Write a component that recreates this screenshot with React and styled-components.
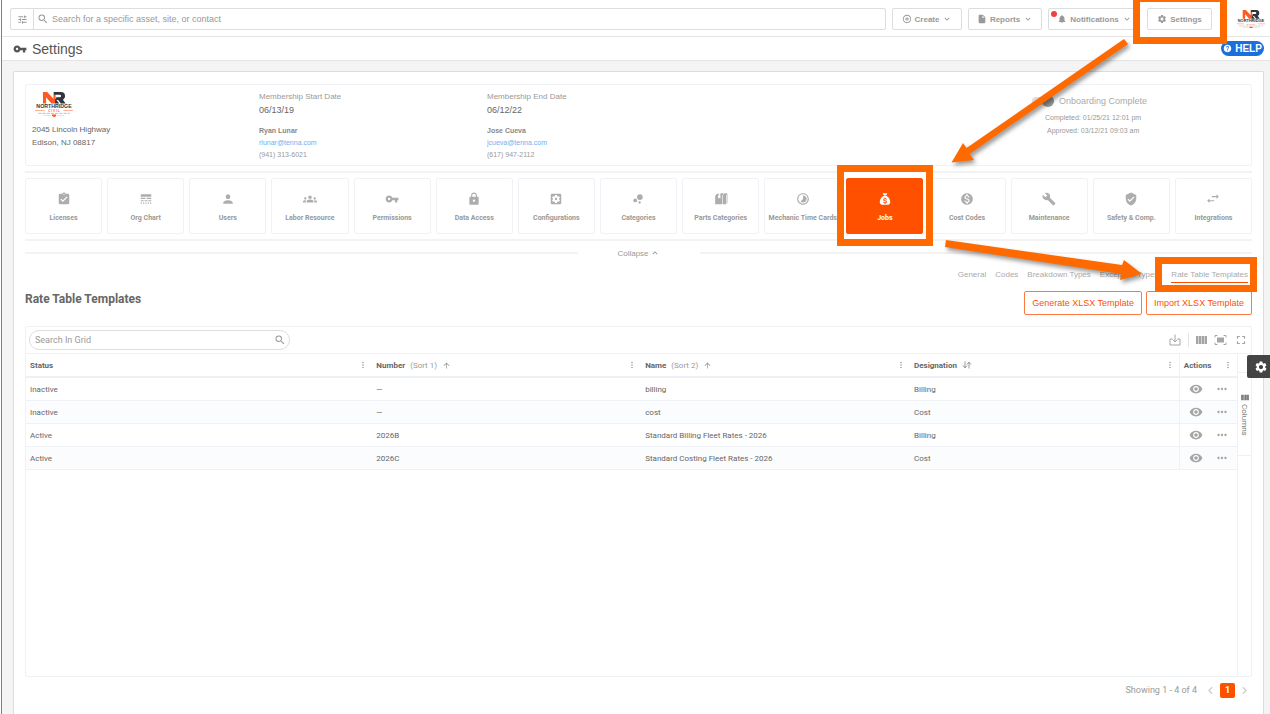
import React from 'react'
import styled, { createGlobalStyle, css } from 'styled-components'
import {
  MdAssignmentTurnedIn,
  MdArrowUpward,
  MdBubbleChart,
  MdBuild,
  MdExpandLess,
  MdExpandMore,
  MdFullscreen,
  MdGroups,
  MdHelp,
  MdInsertDriveFile,
  MdKeyboardArrowLeft,
  MdKeyboardArrowRight,
  MdLineStyle,
  MdLock,
  MdMonetizationOn,
  MdMoreHoriz,
  MdMoreVert,
  MdNotifications,
  MdOutlineAddCircleOutline,
  MdPerson,
  MdSearch,
  MdSettings,
  MdSettingsApplications,
  MdTimelapse,
  MdTune,
  MdVerifiedUser,
  MdVisibility,
  MdVpnKey,
} from 'react-icons/md'

const ORANGE = '#ff5000'
const MARKER = '#ff6a00'
const SANS = "'Liberation Sans', Arial, sans-serif"
const ROBOTO = "Roboto, 'Liberation Sans', sans-serif"

const GlobalStyle = createGlobalStyle`
  * {
    box-sizing: border-box;
  }
  body {
    margin: 0;
    background: #fff;
    color: #666;
    font-family: ${SANS};
    font-size: 8px;
  }
  button, input {
    font-family: inherit;
    margin: 0;
  }
  svg {
    display: block;
    flex-shrink: 0;
  }
`

const Page = styled.div`
  position: relative;
  display: flex;
  flex-direction: column;
  min-height: 100vh;
  margin-left: 1px;
  border-left: 1px solid #7d8287;
  background: #f4f4f4;
  overflow: hidden;
`

const TopBar = styled.header`
  display: flex;
  align-items: center;
  gap: 6px;
  height: 37px;
  padding: 2px 4px 0 8px;
  background: #fff;
  border-bottom: 1px solid #e4e4e4;
`

const SearchBox = styled.div`
  flex: 1;
  display: flex;
  align-items: center;
  height: 22px;
  border: 1px solid #ddd;
  border-radius: 2px;
  color: #999;
`

const FilterButton = styled.button`
  display: flex;
  align-items: center;
  justify-content: center;
  width: 23px;
  height: 20px;
  margin-right: 3px;
  padding: 0;
  border: 0;
  border-right: 1px solid #ddd;
  background: none;
  color: #999;
`

const SearchInput = styled.input`
  flex: 1;
  min-width: 0;
  padding: 0 3px;
  border: 0;
  outline: 0;
  background: none;
  font-size: 9px;
  color: #666;

  &::placeholder {
    color: #999;
    opacity: 1;
  }
`

const BarButton = styled.button`
  position: relative;
  display: flex;
  align-items: center;
  justify-content: center;
  gap: 3px;
  width: ${(props) => props.$width}px;
  height: 22px;
  padding: 0;
  border: 1px solid #ddd;
  border-radius: 2px;
  background: #fff;
  color: #999;
  font-size: 8px;
  font-weight: 700;
`

const AlertDot = styled.span`
  position: absolute;
  top: 2px;
  left: 2px;
  width: 6px;
  height: 6px;
  border-radius: 50%;
  background: #f04040;
`

const Marked = styled.div`
  position: relative;
  z-index: 1;
  display: flex;
  min-width: 0;

  &::before {
    content: '';
    position: absolute;
    z-index: -1;
    inset: ${(props) => props.$inset};
    border: 7px solid ${MARKER};
    background: #fff;
  }
`

const LogoSlot = styled.div`
  display: flex;
  margin-left: 18px;
`

const TitleBar = styled.div`
  display: flex;
  align-items: center;
  gap: 5px;
  height: 24px;
  padding: 0 6px 0 11px;
  background: #fff;
  border-bottom: 1px solid #e4e4e4;
  color: #555;
`

const PageTitle = styled.h1`
  flex: 1;
  margin: 0;
  font-size: 14px;
  font-weight: 400;
  line-height: 16px;
`

const HelpButton = styled.button`
  display: flex;
  align-items: center;
  justify-content: center;
  gap: 3px;
  width: 43px;
  height: 15px;
  padding: 0;
  border: 0;
  border-radius: 8px;
  background: #1a6fdc;
  color: #fff;
  font-size: 10px;
  font-weight: 700;
`

const Panel = styled.main`
  flex: 1;
  display: flex;
  flex-direction: column;
  margin: 10px 6px 0 11px;
  padding: 12px 11px 0;
  border: 1px solid #dcdcdc;
  border-bottom: 0;
  border-radius: 2px 2px 0 0;
  background: #fff;
`

const InfoCard = styled.section`
  display: grid;
  grid-template-columns: 227px 228px 1fr 312px;
  height: 82px;
  padding: 0 6px;
  border: 1px solid #f1f2f7;
  border-radius: 2px;
`

const InfoColumn = styled.div`
  display: flex;
  flex-direction: column;
  padding-top: 7px;
`

const AddressLine = styled.div`
  font-size: 8px;
  line-height: 13px;
  color: #666;
`

const LogoRow = styled.div`
  margin-bottom: 6px;
  padding-left: 2px;
`

const InfoLabel = styled.div`
  font-size: 8px;
  line-height: 10px;
  color: #999;
`

const InfoDate = styled.div`
  margin: 0 0 7px;
  font-size: 9px;
  line-height: 16px;
  color: #666;
`

const ContactLine = styled.div`
  font-size: 7px;
  font-weight: ${(props) => (props.$strong ? 700 : 400)};
  line-height: 12px;
  color: ${(props) => (props.$strong ? '#888' : '#999')};
`

const MailLink = styled.a`
  color: #72aef0;
  text-decoration: none;
`

const Onboarding = styled.div`
  display: flex;
  flex-direction: column;
  padding: 9px 0 0 99px;
`

const SwitchLabel = styled.label`
  display: flex;
  align-items: center;
  gap: 5px;
  margin-bottom: 3px;
  font-size: 9px;
  line-height: 14px;
  color: #aaa;
`

const Switch = styled.input`
  appearance: none;
  display: flex;
  justify-content: flex-end;
  align-items: center;
  width: 22px;
  height: 8px;
  margin: 0;
  border-radius: 4px;
  background: #ddd;

  &::before {
    content: '';
    width: 12px;
    height: 12px;
    border-radius: 50%;
    background: #999;
  }
`

const OnboardingLine = styled.div`
  padding-left: ${(props) => props.$indent}px;
  font-size: 7px;
  line-height: 13px;
  color: #999;
`

const Divider = styled.hr`
  width: 100%;
  height: 2px;
  margin: 5px 0;
  border: 0;
  background: #f3f3f3;
`

const Tiles = styled.nav`
  display: grid;
  grid-template-columns: repeat(15, minmax(0, 1fr));
  gap: 5px;
`

const Tile = styled.button`
  display: flex;
  flex: 1;
  flex-direction: column;
  align-items: center;
  min-width: 0;
  height: 56px;
  padding: 13px 0 0;
  gap: 8px;
  border: 1px solid #f0f2f5;
  border-radius: 2px;
  background: #fff;
  color: #999;
  font-family: ${ROBOTO};
  font-size: 7px;
  font-weight: 700;
  line-height: 8px;
  white-space: nowrap;

  svg {
    color: #adadad;
  }

  ${(props) =>
    props.$active &&
    css`
      border-color: ${ORANGE};
      background: ${ORANGE};
      color: #fff;

      svg {
        color: #fff;
      }
    `}
`

const CollapseRow = styled.div`
  display: flex;
  align-items: center;
  height: 14px;
  margin-bottom: 8px;

  &::before,
  &::after {
    content: '';
    flex: 1;
    height: 2px;
    background: #f3f3f3;
  }
`

const CollapseButton = styled.button`
  display: flex;
  align-items: center;
  justify-content: center;
  gap: 1px;
  width: 122px;
  padding: 0;
  border: 0;
  background: none;
  color: #999;
  font-size: 8px;
`

const Tabs = styled.nav`
  display: flex;
  justify-content: flex-end;
  gap: 9px;
  height: 23px;
  padding: 0 4px;
`

const Tab = styled.a`
  height: 15px;
  padding-top: 2px;
  border-bottom: 1px solid ${(props) => (props.$active ? ORANGE : 'transparent')};
  color: #aaa;
  font-size: 8px;
  line-height: 10px;
  text-decoration: none;
`

const MarkedTab = styled(Marked)`
  margin-left: 4px;
`

const HeadingRow = styled.div`
  display: flex;
  gap: 4px;
  height: 35px;
`

const Heading = styled.h2`
  flex: 1;
  margin: 0;
  font-family: ${ROBOTO};
  font-size: 12px;
  font-weight: 700;
  line-height: 16px;
  color: #666;
`

const OutlineButton = styled.button`
  height: 24px;
  padding: 0 7px;
  border: 1px solid #ff7a40;
  border-radius: 2px;
  background: #fff;
  color: ${ORANGE};
  font-size: 9px;
`

const Grid = styled.section`
  flex: 1;
  display: flex;
  flex-direction: column;
  border: 1px solid #eef1f5;
  border-radius: 2px;
  font-family: ${ROBOTO};
`

const GridToolbar = styled.div`
  display: flex;
  align-items: center;
  justify-content: space-between;
  height: 27px;
  padding: 0 3px;
  border-bottom: 1px solid #eef1f5;
`

const GridSearch = styled.div`
  display: flex;
  align-items: center;
  width: 261px;
  height: 20px;
  padding: 0 3px 0 2px;
  border: 1px solid #ddd;
  border-radius: 10px;
  color: #999;
`

const ToolIcons = styled.div`
  display: flex;
  align-items: center;
  gap: 7px;
`

const ToolDivider = styled.span`
  width: 1px;
  height: 14px;
  background: #e2e6ea;
`

const IconButton = styled.button`
  display: flex;
  padding: 0;
  border: 0;
  background: none;
  color: #a5a5a5;
`

const GridBody = styled.div`
  flex: 1;
  display: flex;
`

const TableArea = styled.div`
  flex: 1;
`

const Table = styled.table`
  width: 100%;
  table-layout: fixed;
  border-collapse: separate;
  border-spacing: 0;
`

const HeadCell = styled.th`
  height: 24px;
  padding: 0 4px;
  border-bottom: 2px solid #edf1f5;
  border-left: ${(props) => (props.$pinned ? '1px solid #eef1f5' : '0')};
  font-size: 8px;
  font-weight: 700;
  text-align: left;
  color: #666;
`

const HeadInner = styled.div`
  display: flex;
  align-items: center;
  gap: 5px;

  svg:last-child {
    margin-left: auto;
  }
`

const SortLabel = styled.span`
  font-weight: 400;
  color: #999;
`

const Row = styled.tr`
  background: ${(props) => (props.$odd ? '#fbfcfe' : '#fff')};
`

const Cell = styled.td`
  height: 23px;
  padding: 0 4px;
  border-bottom: 1px solid #eef1f5;
  border-left: ${(props) => (props.$pinned ? '1px solid #eef1f5' : '0')};
  font-size: 8px;
  color: #666;
`

const RowActions = styled.div`
  display: flex;
  align-items: center;
  gap: 12px;
  padding-left: 5px;
`

const SideBar = styled.aside`
  width: 14px;
  padding-top: 18px;
  border-left: 1px solid #eef1f5;
`

const ColumnsButton = styled.button`
  display: flex;
  align-items: center;
  justify-content: flex-start;
  gap: 3px;
  width: 100%;
  height: 84px;
  padding: 21px 0 0;
  border: 0;
  border-top: 1px solid #eef1f5;
  border-bottom: 1px solid #eef1f5;
  background: none;
  color: #777;
  font-family: ${ROBOTO};
  font-size: 8px;
  writing-mode: vertical-rl;
`

const Footer = styled.footer`
  display: flex;
  align-items: center;
  justify-content: flex-end;
  gap: 2px;
  height: 26px;
  margin-bottom: 11px;
  font-family: ${ROBOTO};
  font-size: 9px;
  color: #999;
`

const ResultCount = styled.span`
  margin-right: 4px;
`

const PageNumber = styled.button`
  width: 15px;
  height: 15px;
  padding: 0;
  border: 0;
  border-radius: 2px;
  background: ${ORANGE};
  color: #fff;
  font-size: 9px;
  font-weight: 700;
`

const Pager = styled(IconButton)`
  color: #ccc;
`

const FloatingSettings = styled.button`
  position: absolute;
  top: 355px;
  right: 0;
  display: flex;
  align-items: center;
  justify-content: flex-end;
  width: 23px;
  height: 23px;
  padding: 0 2px;
  border: 0;
  border-radius: 2px 0 0 2px;
  background: #444;
  color: #fff;
`

const Arrows = styled.svg`
  position: absolute;
  z-index: 2;
  top: 0;
  right: 0;
  pointer-events: none;
  filter: drop-shadow(2px 3px 2px rgba(0, 0, 0, 0.4));
`

function Logo({ width }) {
  return (
    <svg width={width} viewBox="0 0 38 24" role="img" aria-label="Northridge Civil">
      <path d="M8.500 11V0h4l6 6.500V0h2v11h-4l-5-6v6z" fill="#ff5a1f" />
      <path d="M19 0h6.500q4 0 4 4 0 2.500-2 3.300L30 11h-4.500l-2.500-3.500h-2V5h3.500q1.200 0 1.200-1.200t-1.200-1.200H19z" fill="#30343c" />
      <path d="M20 6l4 5h-4z" fill="#30343c" />
      <text
        x="19"
        y="15.500"
        textAnchor="middle"
        fontFamily="Liberation Sans, sans-serif"
        fontSize="5"
        fontWeight="700"
        fill="#30343c"
      >
        NORTHRIDGE
      </text>
      <path d="M1 17.500h9M28 17.500h9" stroke="#ff8a60" strokeWidth="0.700" />
      <text
        x="19"
        y="19"
        textAnchor="middle"
        fontFamily="Liberation Sans, sans-serif"
        fontSize="3"
        fontWeight="700"
        fill="#ff5a1f"
      >
        C I V I L
      </text>
      <path d="M4 20.300h30" stroke="#999" strokeWidth="0.600" strokeDasharray="3 1" />
      <path d="M9 22.300h7M22 22.300h7" stroke="#f0b8a0" strokeWidth="0.500" />
      <path d="M17 21.300h4v1.500L19.500 24 17 22.500z" fill="#ff5a1f" />
    </svg>
  )
}

function MoneyBag() {
  return (
    <svg width="14" height="14" viewBox="0 0 24 24" fill="currentColor">
      <path d="M8 2h8l-2 4h-4z" />
      <path
        fillRule="evenodd"
        d="M9 7h6c4 3 6 6 6 10 0 3-2 5-5 5H8c-3 0-5-2-5-5 0-4 2-7 6-10zm2.300 2.500v1.300c-1.500.3-2.300 1.200-2.300 2.400 0 3 4.500 2 4.500 3.600 0 .6-.5 1-1.500 1s-1.600-.5-1.700-1.200H8.700c.1 1.400 1.100 2.200 2.600 2.500v1.300h1.500v-1.300c1.600-.3 2.500-1.100 2.500-2.400 0-3.100-4.600-2.200-4.600-3.500 0-.6.500-1 1.400-1 .9 0 1.300.4 1.400 1.100h1.600c-.1-1.300-.9-2.200-2.300-2.500V9.500z"
      />
    </svg>
  )
}

function PartsIcon() {
  return (
    <svg width="14" height="14" viewBox="0 0 24 24" fill="currentColor">
      <path d="M2 7l3-4h4L7 7v4l2-1 2 1V7l2-4h1v18H2z" />
      <path d="M15 6l3-4h5l-2 4v15h-6z" />
      <path d="M9.500 6L12 2h5l-2.500 4z" />
      <path d="M22 6l1-3v15l-1 2z" />
    </svg>
  )
}

function SwapIcon() {
  return (
    <svg width="14" height="14" viewBox="0 0 24 24" fill="currentColor">
      <path d="M22 8l-4-4v3h-8v2h8v3zM2 15l4 4v-3h8v-2H6v-3z" />
    </svg>
  )
}

function DownloadIcon() {
  return (
    <svg width="12" height="12" viewBox="0 0 24 24" fill="none" stroke="currentColor" strokeWidth="2">
      <path d="M7 10H2v12h20V10h-5M12 1v15M7 11l5 5 5-5" />
    </svg>
  )
}

function FitIcon() {
  return (
    <svg width="13" height="12" viewBox="0 0 26 24" fill="none" stroke="currentColor" strokeWidth="2">
      <path d="M2 7V3h5M19 3h5v4M24 17v4h-5M7 21H2v-4" />
      <rect x="7" y="8" width="12" height="8" fill="currentColor" />
    </svg>
  )
}

function SortIcon() {
  return (
    <svg width="10" height="8" viewBox="0 0 20 16" fill="none" stroke="#999" strokeWidth="2">
      <path d="M6 1v12M2 9l4 5 4-5M14 15V3M10 7l4-5 4 5" />
    </svg>
  )
}

function BarsIcon({ width = 11, height = 10 }) {
  return (
    <svg width={width} height={height} viewBox="0 0 22 20" fill="currentColor">
      <path d="M0 2h5v16H0zM6 2h4v16H6zM11 2h5v16h-5zM17 2h5v16h-5z" />
    </svg>
  )
}

const TILES = [
  { label: 'Licenses', icon: <MdAssignmentTurnedIn size={14} /> },
  { label: 'Org Chart', icon: <MdLineStyle size={14} /> },
  { label: 'Users', icon: <MdPerson size={14} /> },
  { label: 'Labor Resource', icon: <MdGroups size={14} /> },
  { label: 'Permissions', icon: <MdVpnKey size={14} /> },
  { label: 'Data Access', icon: <MdLock size={14} /> },
  { label: 'Configurations', icon: <MdSettingsApplications size={14} /> },
  { label: 'Categories', icon: <MdBubbleChart size={14} /> },
  { label: 'Parts Categories', icon: <PartsIcon /> },
  { label: 'Mechanic Time Cards', icon: <MdTimelapse size={14} /> },
  { label: 'Jobs', icon: <MoneyBag />, active: true },
  { label: 'Cost Codes', icon: <MdMonetizationOn size={14} /> },
  { label: 'Maintenance', icon: <MdBuild size={14} /> },
  { label: 'Safety & Comp.', icon: <MdVerifiedUser size={14} /> },
  { label: 'Integrations', icon: <SwapIcon /> },
]

const TABS = ['General', 'Codes', 'Breakdown Types', 'Exception Types']

const COLUMNS = [
  { label: 'Status', width: '28.6%' },
  { label: 'Number', sort: '(Sort 1)', width: '22.2%' },
  { label: 'Name', sort: '(Sort 2)', width: '22.2%' },
  { label: 'Designation', sortable: true, width: '22.2%' },
  { label: 'Actions', pinned: true, width: '4.8%' },
]

const ROWS = [
  ['Inactive', '—', 'billing', 'Billing'],
  ['Inactive', '—', 'cost', 'Cost'],
  ['Active', '2026B', 'Standard Billing Fleet Rates - 2026', 'Billing'],
  ['Active', '2026C', 'Standard Costing Fleet Rates - 2026', 'Cost'],
]

function Contact({ label, date, name, email, phone }) {
  return (
    <InfoColumn>
      <InfoLabel>{label}</InfoLabel>
      <InfoDate>{date}</InfoDate>
      <ContactLine $strong>{name}</ContactLine>
      <ContactLine>
        <MailLink href={`mailto:${email}`}>{email}</MailLink>
      </ContactLine>
      <ContactLine>{phone}</ContactLine>
    </InfoColumn>
  )
}

function Header() {
  return (
    <>
      <TopBar>
        <SearchBox>
          <FilterButton aria-label="Filters">
            <MdTune size={11} />
          </FilterButton>
          <MdSearch size={12} />
          <SearchInput
            aria-label="Search"
            placeholder="Search for a specific asset, site, or contact"
          />
        </SearchBox>
        <BarButton $width={70}>
          <MdOutlineAddCircleOutline size={10} />
          Create
          <MdExpandMore size={10} />
        </BarButton>
        <BarButton $width={74}>
          <MdInsertDriveFile size={10} />
          Reports
          <MdExpandMore size={10} />
        </BarButton>
        <BarButton $width={93}>
          <AlertDot />
          <MdNotifications size={10} />
          Notifications
          <MdExpandMore size={10} />
        </BarButton>
        <Marked $inset="-13px -15px -14px -14px">
          <BarButton $width={65}>
            <MdSettings size={10} />
            Settings
          </BarButton>
        </Marked>
        <LogoSlot>
          <Logo width={30} />
        </LogoSlot>
      </TopBar>
      <TitleBar>
        <MdVpnKey size={14} />
        <PageTitle>Settings</PageTitle>
        <HelpButton>
          <MdHelp size={9} />
          HELP
        </HelpButton>
      </TitleBar>
    </>
  )
}

function TemplatesGrid() {
  return (
    <Grid>
      <GridToolbar>
        <GridSearch>
          <SearchInput aria-label="Search in grid" placeholder="Search In Grid" />
          <MdSearch size={12} />
        </GridSearch>
        <ToolIcons>
          <IconButton aria-label="Download">
            <DownloadIcon />
          </IconButton>
          <ToolDivider />
          <IconButton aria-label="Columns">
            <BarsIcon />
          </IconButton>
          <IconButton aria-label="Fit to width">
            <FitIcon />
          </IconButton>
          <IconButton aria-label="Full screen">
            <MdFullscreen size={14} />
          </IconButton>
        </ToolIcons>
      </GridToolbar>
      <GridBody>
        <TableArea>
          <Table>
            <colgroup>
              {COLUMNS.map((column) => (
                <col key={column.label} width={column.width} />
              ))}
            </colgroup>
            <thead>
              <tr>
                {COLUMNS.map((column) => (
                  <HeadCell key={column.label} $pinned={column.pinned}>
                    <HeadInner>
                      {column.label}
                      {column.sort && <SortLabel>{column.sort}</SortLabel>}
                      {column.sort && <MdArrowUpward size={9} color="#999" />}
                      {column.sortable && <SortIcon />}
                      <MdMoreVert size={10} color="#999" />
                    </HeadInner>
                  </HeadCell>
                ))}
              </tr>
            </thead>
            <tbody>
              {ROWS.map((row, index) => (
                <Row key={row[2]} $odd={index % 2 === 1}>
                  {row.map((value, i) => (
                    <Cell key={COLUMNS[i].label}>{value}</Cell>
                  ))}
                  <Cell $pinned>
                    <RowActions>
                      <IconButton aria-label="View">
                        <MdVisibility size={14} />
                      </IconButton>
                      <IconButton aria-label="More">
                        <MdMoreHoriz size={14} />
                      </IconButton>
                    </RowActions>
                  </Cell>
                </Row>
              ))}
            </tbody>
          </Table>
        </TableArea>
        <SideBar>
          <ColumnsButton>
            <BarsIcon width={8} height={7} />
            Columns
          </ColumnsButton>
        </SideBar>
      </GridBody>
    </Grid>
  )
}

export default function App() {
  return (
    <>
      <GlobalStyle />
      <Page>
        <Header />
        <Panel>
          <InfoCard>
            <InfoColumn>
              <LogoRow>
                <Logo width={40} />
              </LogoRow>
              <AddressLine>2045 Lincoln Highway</AddressLine>
              <AddressLine>Edison, NJ 08817</AddressLine>
            </InfoColumn>
            <Contact
              label="Membership Start Date"
              date="06/13/19"
              name="Ryan Lunar"
              email="rlunar@tenna.com"
              phone="(941) 313-6021"
            />
            <Contact
              label="Membership End Date"
              date="06/12/22"
              name="Jose Cueva"
              email="jcueva@tenna.com"
              phone="(617) 947-2112"
            />
            <Onboarding>
              <SwitchLabel>
                <Switch type="checkbox" role="switch" defaultChecked />
                Onboarding Complete
              </SwitchLabel>
              <OnboardingLine $indent={13}>Completed: 01/25/21 12:01 pm</OnboardingLine>
              <OnboardingLine $indent={15}>Approved: 03/12/21 09:03 am</OnboardingLine>
            </Onboarding>
          </InfoCard>
          <Divider />
          <Tiles>
            {TILES.map((tile) => {
              const button = (
                <Tile key={tile.label} $active={tile.active}>
                  {tile.icon}
                  {tile.label}
                </Tile>
              )
              return tile.active ? (
                <Marked key={tile.label} $inset="-13px -10px -12px -9px">
                  {button}
                </Marked>
              ) : (
                button
              )
            })}
          </Tiles>
          <Divider />
          <CollapseRow>
            <CollapseButton>
              Collapse
              <MdExpandLess size={10} />
            </CollapseButton>
          </CollapseRow>
          <Tabs>
            {TABS.map((tab) => (
              <Tab key={tab} href="#">
                {tab}
              </Tab>
            ))}
            <MarkedTab $inset="-11px -9px -1px -16px">
              <Tab href="#" $active>
                Rate Table Templates
              </Tab>
            </MarkedTab>
          </Tabs>
          <HeadingRow>
            <Heading>Rate Table Templates</Heading>
            <OutlineButton>Generate XLSX Template</OutlineButton>
            <OutlineButton>Import XLSX Template</OutlineButton>
          </HeadingRow>
          <TemplatesGrid />
          <Footer>
            <ResultCount>Showing 1 - 4 of 4</ResultCount>
            <Pager aria-label="Previous page">
              <MdKeyboardArrowLeft size={15} />
            </Pager>
            <PageNumber>1</PageNumber>
            <Pager aria-label="Next page">
              <MdKeyboardArrowRight size={15} />
            </Pager>
          </Footer>
        </Panel>
        <FloatingSettings aria-label="Open settings">
          <MdSettings size={14} />
        </FloatingSettings>
        <Arrows width="340" height="300" viewBox="930 0 340 300" fill={MARKER}>
          <path d="M1124 39l4 5-158.500 110 4.500 6-22.500 2.500L963 143l3.500 5z" />
          <path d="M946 240l176 25 2-5 18 14-22 6 1-6-176-27z" />
        </Arrows>
      </Page>
    </>
  )
}
